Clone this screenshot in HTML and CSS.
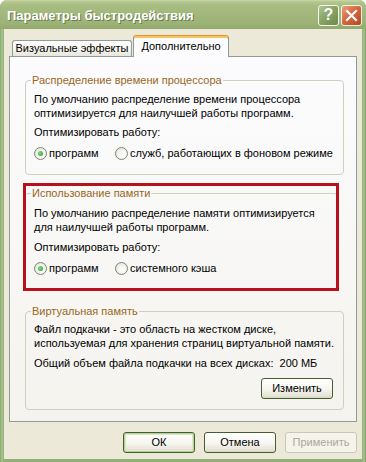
FILE: index.html
```html
<!DOCTYPE html>
<html lang="ru">
<head>
<meta charset="utf-8">
<title>Параметры быстродействия</title>
<link rel="stylesheet" href="styles.css">
</head>
<body>
<div class="window">
  <div class="titlebar">
    <span class="title">Параметры быстродействия</span>
    <div class="caption-btns">
      <span class="cap-btn help">?</span>
      <span class="cap-btn close">
        <svg width="13" height="13" viewBox="0 0 13 13"><path d="M2 2 L11 11 M11 2 L2 11" stroke="#fff" stroke-width="2.2" stroke-linecap="square"/></svg>
      </span>
    </div>
  </div>
  <div class="client">
    <div class="tabs">
      <div class="tab">Визуальные эффекты</div>
      <div class="tab active">Дополнительно</div>
    </div>
    <div class="panel">
      <fieldset class="grp grp-cpu">
        <legend>Распределение времени процессора</legend>
        <p class="desc">По умолчанию распределение времени процессора<br>оптимизируется для наилучшей работы программ.</p>
        <p class="opt">Оптимизировать работу:</p>
        <div class="radios">
          <label class="radio first"><span class="dot checked"></span>программ</label>
          <label class="radio"><span class="dot"></span>служб, работающих в фоновом режиме</label>
        </div>
      </fieldset>
      <fieldset class="grp grp-mem">
        <legend>Использование памяти</legend>
        <p class="desc">По умолчанию распределение памяти оптимизируется<br>для наилучшей работы программ.</p>
        <p class="opt">Оптимизировать работу:</p>
        <div class="radios">
          <label class="radio first"><span class="dot checked"></span>программ</label>
          <label class="radio"><span class="dot"></span>системного кэша</label>
        </div>
      </fieldset>
      <fieldset class="grp grp-vm">
        <legend>Виртуальная память</legend>
        <p class="desc">Файл подкачки - это область на жестком диске,<br>используемая для хранения страниц виртуальной памяти.</p>
        <p class="opt">Общий объем файла подкачки на всех дисках:&nbsp; 200 МБ</p>
        <div class="right-row"><span class="btn">Изменить</span></div>
      </fieldset>
      <div class="highlight"></div>
    </div>
    <div class="buttons">
      <span class="btn default">ОК</span>
      <span class="btn">Отмена</span>
      <span class="btn disabled">Применить</span>
    </div>
  </div>
</div>
</body>
</html>
```
FILE: styles.css
```css
* { box-sizing: border-box; }
html, body { margin: 0; padding: 0; background: #ffffff; }
body {
  font-family: "Liberation Sans", Arial, sans-serif;
  font-size: 11px;
  color: #000;
  white-space: nowrap;
}
.window {
  width: 366px;
  height: 462px;
  background: linear-gradient(90deg, #8aa86e 0, #a9c48f 2px, #93b078 4px, #93b078 362px, #a9c48f 364px, #7f9c65 366px);
  border-radius: 7px 7px 0 0;
  display: flex;
  flex-direction: column;
  overflow: hidden;
}
.titlebar {
  height: 29px;
  flex: none;
  display: flex;
  align-items: center;
  justify-content: space-between;
  padding: 0 4px 0 7px;
  background: linear-gradient(#c9d8ab 0, #b2c68d 2px, #a7bc81 6px, #a2b77c 50%, #9cb276 80%, #93aa6e 100%);
  border-radius: 7px 7px 0 0;
}
.title {
  color: #fff;
  font-weight: bold;
  font-size: 13px;
  text-shadow: 1px 1px 0 #6a7d4c;
  margin-top: 1px;
}
.caption-btns { display: flex; gap: 2px; margin-top: 1px; }
.cap-btn {
  width: 21px;
  height: 21px;
  border: 1px solid #f4f6ee;
  border-radius: 3px;
  display: flex;
  align-items: center;
  justify-content: center;
  color: #fff;
}
.help {
  background: linear-gradient(135deg, #aec594 0, #8aa468 45%, #6b8a48 100%);
  font-weight: bold;
  font-size: 16px;
}
.close {
  background: linear-gradient(135deg, #eba07a 0, #d5683f 45%, #b9461f 100%);
}
.client {
  flex: 1;
  margin: 0 4px 3px 4px;
  background: #ece9d8;
  padding: 6px 5px 0 5px;
  display: flex;
  flex-direction: column;
}
.tabs {
  display: flex;
  align-items: flex-end;
  height: 22px;
  padding-left: 3px;
  margin-bottom: -1px;
  position: relative;
  z-index: 1;
}
.tab {
  height: 16px;
  width: 120px;
  margin-bottom: 1px;
  border: 1px solid #919b9c;
  border-bottom: none;
  border-radius: 3px 3px 0 0;
  background: linear-gradient(#ffffff, #f3f2ec 60%, #e8e6dc);
  text-align: center;
  line-height: 15px;
}
.tab.active {
  height: 22px;
  width: 96px;
  margin-left: 1px;
  margin-bottom: 0;
  border-top-color: #e3922e;
  background: #fcfcfe;
  box-shadow: inset 0 2px 0 #f8c563;
  padding-top: 2px;
  line-height: 17px;
}
.panel {
  height: 366px;
  flex: none;
  border: 1px solid #919b9c;
  background: linear-gradient(#fcfcfe, #f4f3ee);
  padding: 0 12px 0 15px;
  position: relative;
}
.grp {
  margin: 0;
  border: 1px solid #d0d0bf;
  border-radius: 4px;
  padding: 0 10px 0 8px;
  min-width: 0;
}
.grp legend {
  padding: 0 1px;
  margin-left: -3px;
  line-height: 14px;
  color: #9a6622;
}
.grp p { margin: 0; line-height: 14px; }
.desc { margin-top: 5px !important; }
.opt { margin-top: 5px !important; }
.grp-cpu { margin-top: 16px; padding-bottom: 14px; }
.grp-mem {
  margin-top: 11px;
  margin-right: 6px;
  padding-bottom: 16px;
  border-left-color: transparent;
  border-right-color: transparent;
  border-bottom-color: transparent;
}
.grp-mem .desc { margin-top: 6px !important; }
.grp-mem .opt { margin-top: 6px !important; }
.grp-vm { margin-top: 12px; padding-bottom: 10px; }
.grp-vm .desc { margin-top: 4px !important; }
.grp-vm .opt { margin-top: 6px !important; }
.radios {
  display: flex;
  align-items: center;
  margin-top: 7px;
  height: 14px;
}
.radios .radio { display: flex; align-items: center; flex: none; }
.radios .first { width: 81px; }
.dot {
  width: 13px;
  height: 13px;
  border-radius: 50%;
  border: 1px solid #7f8472;
  background: radial-gradient(circle at 60% 60%, #ffffff 0, #f4f4f0 45%, #d8d8cc 100%);
  margin-right: 2px;
  position: relative;
  flex: none;
}
.dot.checked::after {
  content: "";
  position: absolute;
  left: 3px;
  top: 3px;
  width: 5px;
  height: 5px;
  border-radius: 50%;
  background: radial-gradient(circle at 40% 40%, #7ee07e, #1f9a2a);
}
.right-row {
  display: flex;
  justify-content: flex-end;
  margin-top: 8px;
}
.btn {
  width: 72px;
  height: 21px;
  border: 1px solid #44602f;
  border-radius: 3px;
  background: linear-gradient(#ffffff, #f6f5ef 55%, #e6e3d6 90%, #d8d4c4);
  text-align: center;
  line-height: 19px;
  display: inline-block;
}
.btn.default {
  box-shadow: inset 0 0 0 1px #b7d09c, inset 0 0 0 2px #dbe9c9;
}
.btn.disabled {
  border-color: #c9c7ba;
  color: #aca899;
  background: #f5f4ea;
}
.buttons {
  display: flex;
  justify-content: flex-end;
  gap: 9px;
  margin-top: 10px;
}
.highlight {
  position: absolute;
  left: 13px;
  top: 126px;
  width: 316px;
  height: 108px;
  border: 3px solid #b5121b;
  pointer-events: none;
}
```
